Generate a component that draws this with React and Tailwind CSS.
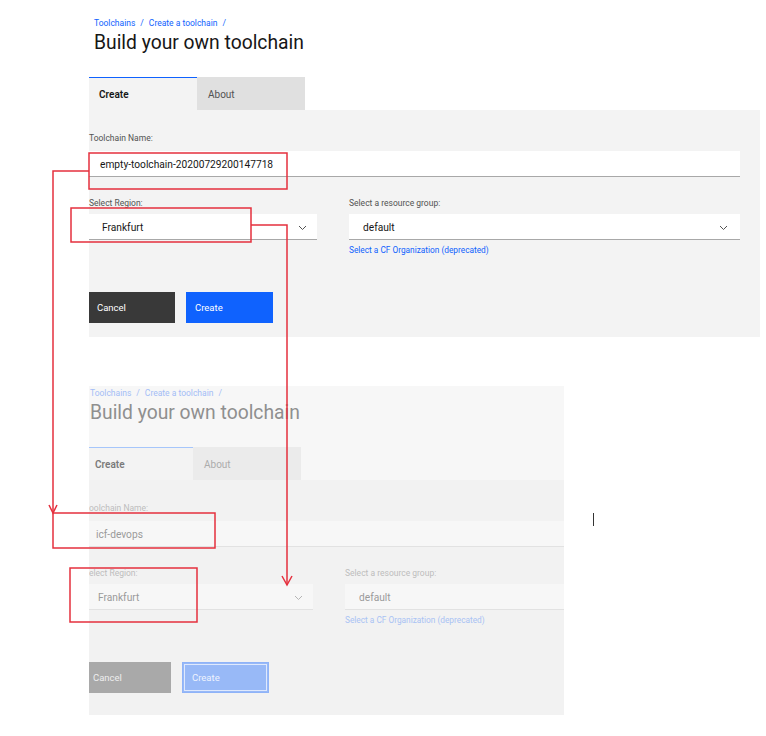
const styles = {
  normal: {
    wrap: "pt-[18px]",
    crumb: "text-[#0f62fe]",
    title: "text-[#161616]",
    tabOn: "border-t border-[#0f62fe] bg-[#f3f3f3] text-[#161616]",
    tabOff: "bg-[#e0e0e0] text-[#525252]",
    panel: "bg-[#f3f3f3] pb-[14px]",
    label: "text-[#525252]",
    field: "bg-white border-[#a8a8a8] text-[#161616]",
    chevron: "#525252",
    link: "text-[#0f62fe]",
    cancel: "bg-[#393939] text-white",
    create: "bg-[#0f62fe] text-white",
    cut: "",
  },
  faded: {
    wrap: "pt-[2px]",
    crumb: "text-[#a3bdf6]",
    title: "text-[#8f8f8f]",
    tabOn: "border-t border-[#a6c6fb] bg-[#f3f3f3] text-[#7a7a7a]",
    tabOff: "bg-[#ebebeb] text-[#ababab]",
    panel: "bg-[#f2f2f2] pb-[22px]",
    label: "text-[#bdbdbd]",
    field: "bg-[#f7f7f7] border-[#e2e2e2] text-[#9a9a9a]",
    chevron: "#b5b5b5",
    link: "text-[#a9c2f4]",
    cancel: "bg-[#a9a9a9] text-[#eeeeee]",
    create:
      "bg-[#98b9f7] text-[#eef3fe] outline outline-1 outline-[#dfe9fd] -outline-offset-[3px] border border-[#8fb3f8]",
    // the old screenshot is cropped on its left edge
    cut: "pl-[4px]",
  },
};

function Chevron({ color }) {
  return (
    <svg width="9" height="6" viewBox="0 0 9 6" fill="none">
      <polyline points="1,1 4.5,4.5 8,1" stroke={color} strokeWidth="1" />
    </svg>
  );
}

function ToolchainForm({ variant, name, nameLabel, regionLabel }) {
  const s = styles[variant];

  return (
    <div className={`w-[671px] ${s.wrap}`}>
      <div className="pl-[5px]">
        <p className={`text-[8.5px] leading-[11px] ${s.crumb}`}>
          Toolchains<span className="mx-[5px]">/</span>Create a toolchain
          <span className="ml-[5px]">/</span>
        </p>
        <h1 className={`mt-[1px] text-[19.3px] leading-[26px] ${s.title}`}>
          Build your own toolchain
        </h1>
      </div>

      <div className="mt-[21px] flex h-[33px] text-[10px]">
        <div className={`flex w-[108px] items-center pt-[1px] pl-[10px] font-semibold ${s.tabOn}`}>
          Create
        </div>
        <div className={`flex w-[108px] items-center pt-[2px] pl-[11px] ${s.tabOff}`}>
          About
        </div>
      </div>

      <div className={`pt-[23px] pr-[20px] ${s.panel}`}>
        <label className={`block text-[8.5px] leading-[10px] ${s.label} ${s.cut}`}>
          {nameLabel}
        </label>
        <div
          className={`mt-[8px] flex h-[26px] items-center border-b pt-[2px] pl-[11px] text-[10.2px] ${s.field}`}
        >
          {name}
        </div>

        <div className="mt-[21px] grid grid-cols-[228px_1fr] gap-x-[32px]">
          <div>
            <label className={`block text-[8.5px] leading-[10px] ${s.label} ${s.cut}`}>
              {regionLabel}
            </label>
            <div
              className={`mt-[6px] flex h-[26px] items-center justify-between border-b pt-[2px] pl-[13px] pr-[10px] text-[10.2px] ${s.field}`}
            >
              <span>Frankfurt</span>
              <Chevron color={s.chevron} />
            </div>
          </div>
          <div>
            <label className={`block text-[8.5px] leading-[10px] ${s.label}`}>
              Select a resource group:
            </label>
            <div
              className={`mt-[6px] flex h-[26px] items-center justify-between border-b pt-[2px] pl-[14px] pr-[12px] text-[10.2px] ${s.field}`}
            >
              <span>default</span>
              <Chevron color={s.chevron} />
            </div>
            <p className={`mt-[5px] text-[8.3px] leading-[10px] ${s.link}`}>
              Select a CF Organization (deprecated)
            </p>
          </div>
        </div>

        <div className="mt-[37px] flex gap-[11px] text-[9.5px]">
          <button className={`flex h-[31px] w-[86px] items-center pt-[2px] pl-[8px] ${s.cancel}`}>
            Cancel
          </button>
          <button className={`flex h-[31px] w-[87px] items-center pt-[2px] pl-[9px] ${s.create}`}>
            Create
          </button>
        </div>
      </div>
    </div>
  );
}

export default function App() {
  return (
    <div className="relative h-[736px] w-[766px] overflow-hidden bg-white font-['Roboto',sans-serif]">
      <div className="ml-[89px]">
        <ToolchainForm
          variant="normal"
          name="empty-toolchain-20200729200147718"
          nameLabel="Toolchain Name:"
          regionLabel="Select Region:"
        />
      </div>

      <div className="ml-[89px] mt-[49px] w-[475px] overflow-hidden bg-[#f7f7f7]">
        <div className="-ml-[4px]">
          <ToolchainForm
            variant="faded"
            name="icf-devops"
            nameLabel="oolchain Name:"
            regionLabel="elect Region:"
          />
        </div>
      </div>

      {/* text cursor */}
      <div className="absolute left-[593px] top-[513px] h-[13px] w-px bg-[#333333]" />

      {/* red annotations */}
      <svg
        className="pointer-events-none absolute inset-0"
        width="766"
        height="736"
        viewBox="0 0 766 736"
        fill="none"
        stroke="#e5303e"
        strokeWidth="1.5"
      >
        <path d="M89 153 H287 V189 H89 Z" />
        <path d="M89 171 H53 V513" />
        <path d="M49 505 L53 513 L57 505" />
        <path d="M53 513 H215 V548 H53 Z" />
        <path d="M71 208 H251 V242 H71 Z" />
        <path d="M251 225 H287 V585" />
        <path d="M282 576 L287 585 L292 576" />
        <path d="M70 568 H197 V622 H70 Z" />
      </svg>
    </div>
  );
}
